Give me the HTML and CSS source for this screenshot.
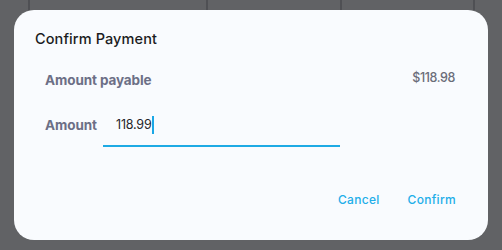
FILE: index.html
```html
<!DOCTYPE html>
<html>
<head>
<meta charset="utf-8">
<link rel="stylesheet" href="styles.css">
</head>
<body>
<div class="backdrop">
  <div class="cols">
    <div class="col c1"></div>
    <div class="col c2"></div>
    <div class="col c3"></div>
    <div class="col c4"></div>
    <div class="col c5"></div>
  </div>
  <div class="dialog">
    <h1 class="title">Confirm Payment</h1>
    <div class="row payable">
      <span class="label">Amount payable</span>
      <span class="value">$118.98</span>
    </div>
    <div class="row amount">
      <span class="label">Amount</span>
      <div class="field"><span class="input-text">118.99</span><span class="caret"></span></div>
    </div>
    <div class="actions">
      <button class="btn">Cancel</button>
      <button class="btn">Confirm</button>
    </div>
  </div>
</div>
</body>
</html>
```
FILE: styles.css
```css
* { box-sizing: border-box; }
html, body { margin: 0; padding: 0; }
body {
  width: 502px;
  height: 250px;
  background: #616265;
  font-family: Inter, "Noto Sans", sans-serif;
  overflow: hidden;
}
.backdrop {
  display: flex;
  flex-direction: column;
  height: 250px;
}
.cols {
  display: grid;
  grid-template-columns: 28px 178px 134px 133px 1fr;
  height: 10px;
}
.col { border-left: 2px solid #4f5054; }
.c1 { border-left: none; }
.dialog {
  margin: 0 14px;
  height: 230px;
  background: #f9fbfe;
  border-radius: 20px;
  padding: 19px 33px 0 21px;
  display: flex;
  flex-direction: column;
}
.title {
  margin: 0;
  font-size: 14.5px;
  font-weight: 500;
  line-height: 20px;
  color: #1b1b1d;
  letter-spacing: 0.1px;
}
.row {
  display: flex;
  align-items: center;
  padding-left: 10px;
}
.payable {
  margin-top: 20px;
  justify-content: space-between;
  height: 22px;
}
.label {
  font-size: 13.5px;
  font-weight: 700;
  color: #6c6f86;
  letter-spacing: -0.1px;
}
.value {
  font-size: 12.5px;
  font-weight: 500;
  color: #6b6d79;
  margin-top: -6px;
  letter-spacing: -0.4px;
}
.amount {
  margin-top: 12px;
  align-items: flex-start;
}
.amount .label {
  width: 58px;
  padding-top: 14px;
}
.field {
  width: 237px;
  height: 44px;
  border-bottom: 2px solid #1eaae4;
  padding: 13px 0 0 13px;
  display: flex;
  align-items: flex-start;
}
.input-text {
  font-size: 12.5px;
  color: #26262a;
  line-height: 18px;
  letter-spacing: -0.2px;
}
.caret {
  width: 2px;
  height: 18px;
  background: #1ba7e6;
  margin-left: 1px;
}
.actions {
  margin-top: 44px;
  display: flex;
  justify-content: flex-end;
  gap: 28px;
  margin-right: -1px;
}
.btn {
  border: none;
  background: none;
  padding: 0;
  font-family: inherit;
  font-size: 12px;
  font-weight: 500;
  letter-spacing: 0.3px;
  color: #22aee9;
  line-height: 18px;
}
```
